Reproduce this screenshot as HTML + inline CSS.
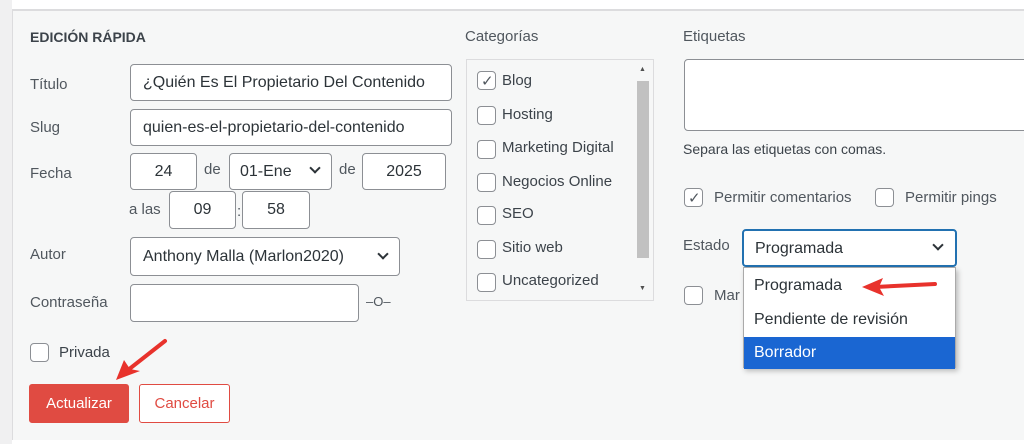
<!DOCTYPE html><html><head><meta charset="utf-8"><style>
*{box-sizing:border-box;margin:0;padding:0}
body{width:1024px;height:444px;overflow:hidden;background:#fff;font-family:"Liberation Sans",sans-serif;color:#3c434a;position:relative;font-size:15px}
.a{position:absolute}
.in{position:absolute;background:#fff;border:1px solid #8c8f94;border-radius:4px;font-size:16px;color:#2c3338;padding-left:12px;line-height:35px;white-space:nowrap;overflow:hidden}
.lb{position:absolute;font-size:15px;color:#50575e}
.cb{position:absolute;width:19px;height:19px;border:1px solid #8c8f94;border-radius:4px;background:#fff}
.ct{position:absolute;font-size:15px;color:#3c434a}
.chev{position:absolute;width:8px;height:8px;border-right:2px solid #2c3338;border-bottom:2px solid #2c3338;transform:rotate(45deg)}
</style></head><body>
<div class="a" style="left:0;top:0;width:12px;height:444px;background:#f0f0f1"></div>
<div class="a" style="left:12px;top:9px;width:1012px;height:431px;background:#f6f7f7;border-left:1px solid #dcdcde;border-top:2px solid #dcdcde"></div>
<div class="a" style="left:30px;top:29px;font-weight:bold;font-size:14px;color:#3c434a">EDICIÓN RÁPIDA</div>
<div class="lb" style="left:30px;top:76px">Título</div>
<div class="in" style="left:130px;top:64px;width:322px;height:37px">¿Quién Es El Propietario Del Contenido</div>
<div class="lb" style="left:30px;top:119px">Slug</div>
<div class="in" style="left:130px;top:109px;width:322px;height:37px">quien-es-el-propietario-del-contenido</div>
<div class="lb" style="left:30px;top:165px">Fecha</div>
<div class="in" style="left:130px;top:153px;width:67px;height:37px;padding:0;text-align:center">24</div>
<div class="lb" style="left:204px;top:161px">de</div>
<div class="in" style="left:229px;top:153px;width:103px;height:37px;padding-left:10px">01-Ene</div><div class="chev" style="left:311px;top:164px"></div>
<div class="lb" style="left:339px;top:161px">de</div>
<div class="in" style="left:362px;top:153px;width:84px;height:37px;padding:0;text-align:center">2025</div>
<div class="lb" style="left:129px;top:201px">a las</div>
<div class="in" style="left:169px;top:191px;width:67px;height:38px;padding:0;text-align:center">09</div>
<div class="lb" style="left:237px;top:203px">:</div>
<div class="in" style="left:242px;top:191px;width:68px;height:38px;padding:0;text-align:center">58</div>
<div class="lb" style="left:30px;top:246px">Autor</div>
<div class="in" style="left:130px;top:237px;width:270px;height:39px;line-height:38px">Anthony Malla (Marlon2020)</div><div class="chev" style="left:379px;top:250px"></div>
<div class="lb" style="left:30px;top:294px">Contraseña</div>
<div class="in" style="left:130px;top:284px;width:229px;height:38px"></div>
<div class="lb" style="left:366px;top:294px;font-size:13px">–O–</div>
<div class="cb" style="left:30px;top:343px"></div>
<div class="ct" style="left:59px;top:344px">Privada</div>
<div class="a" style="left:29px;top:384px;width:100px;height:39px;background:#e04b42;border-radius:3px;color:#fff;font-size:15px;text-align:center;line-height:39px">Actualizar</div>
<div class="a" style="left:139px;top:384px;width:91px;height:39px;border:1px solid #e04b42;border-radius:3px;color:#e04b42;font-size:15px;text-align:center;line-height:37px;background:#fff">Cancelar</div>
<div class="lb" style="left:465px;top:28px">Categorías</div>
<div class="a" style="left:466px;top:59px;width:188px;height:242px;border:1px solid #dcdcde;background:#f6f7f7"></div>
<div class="a" style="left:652px;top:81px;width:12px;height:177px;background:#c1c1c1;margin-left:-15px"></div>
<div class="a" style="left:654px;top:66px;font-size:7px;color:#505050;margin-left:-15px">▲</div>
<div class="a" style="left:654px;top:285px;font-size:7px;color:#505050;margin-left:-15px">▼</div>
<div class="cb" style="left:477px;top:71px"></div><div class="a" style="left:481px;top:72px;font-size:15px;color:#50575e">✓</div><div class="ct" style="left:502px;top:72px">Blog</div>
<div class="cb" style="left:477px;top:106px"></div><div class="ct" style="left:502px;top:106px">Hosting</div>
<div class="cb" style="left:477px;top:140px"></div><div class="ct" style="left:502px;top:139px">Marketing Digital</div>
<div class="cb" style="left:477px;top:173px"></div><div class="ct" style="left:502px;top:173px">Negocios Online</div>
<div class="cb" style="left:477px;top:206px"></div><div class="ct" style="left:502px;top:205px">SEO</div>
<div class="cb" style="left:477px;top:240px"></div><div class="ct" style="left:502px;top:239px">Sitio web</div>
<div class="cb" style="left:477px;top:273px"></div><div class="ct" style="left:502px;top:272px">Uncategorized</div>
<div class="lb" style="left:683px;top:28px">Etiquetas</div>
<div class="a" style="left:684px;top:59px;width:360px;height:72px;background:#fff;border:1px solid #8c8f94;border-radius:4px"></div>
<div class="lb" style="left:683px;top:141px;color:#3c434a;font-size:14px">Separa las etiquetas con comas.</div>
<div class="cb" style="left:684px;top:188px"></div><div class="a" style="left:688px;top:189px;font-size:15px;color:#50575e">✓</div><div class="ct" style="left:714px;top:189px;color:#50575e">Permitir comentarios</div>
<div class="cb" style="left:875px;top:188px"></div><div class="ct" style="left:905px;top:189px;color:#50575e">Permitir pings</div>
<div class="lb" style="left:683px;top:237px">Estado</div>
<div class="cb" style="left:684px;top:286px"></div><div class="ct" style="left:714px;top:287px;color:#50575e">Mar</div>
<div class="a" style="left:742px;top:229px;width:215px;height:38px;border:2px solid #2271b1;border-radius:4px;background:#fff;font-size:16px;color:#2c3338;padding-left:11px;line-height:35px">Programada</div><div class="chev" style="left:934px;top:241px"></div>
<div class="a" style="left:743px;top:267px;width:213px;height:101px;background:#fff;border:1px solid #aaa;box-shadow:2px 3px 5px rgba(0,0,0,.25);font-size:16px;color:#2c3338">
<div style="height:35px;line-height:35px;padding-left:10px">Programada</div>
<div style="height:34px;line-height:34px;padding-left:10px">Pendiente de revisión</div>
<div style="height:32px;line-height:32px;padding-left:10px;background:#1a66d2;color:#fff">Borrador</div></div>
<svg class="a" style="left:0;top:0" width="1024" height="444">
<line x1="935" y1="284" x2="875" y2="287" stroke="#e8322c" stroke-width="4" stroke-linecap="round"/>
<polygon points="862,287 883,278 879,287 884,296" fill="#e8322c"/>
<line x1="165" y1="341" x2="128" y2="370" stroke="#e8322c" stroke-width="4" stroke-linecap="round"/>
<polygon points="116,380 124,360 130,369 140,371" fill="#e8322c"/>
</svg>
</body></html>
